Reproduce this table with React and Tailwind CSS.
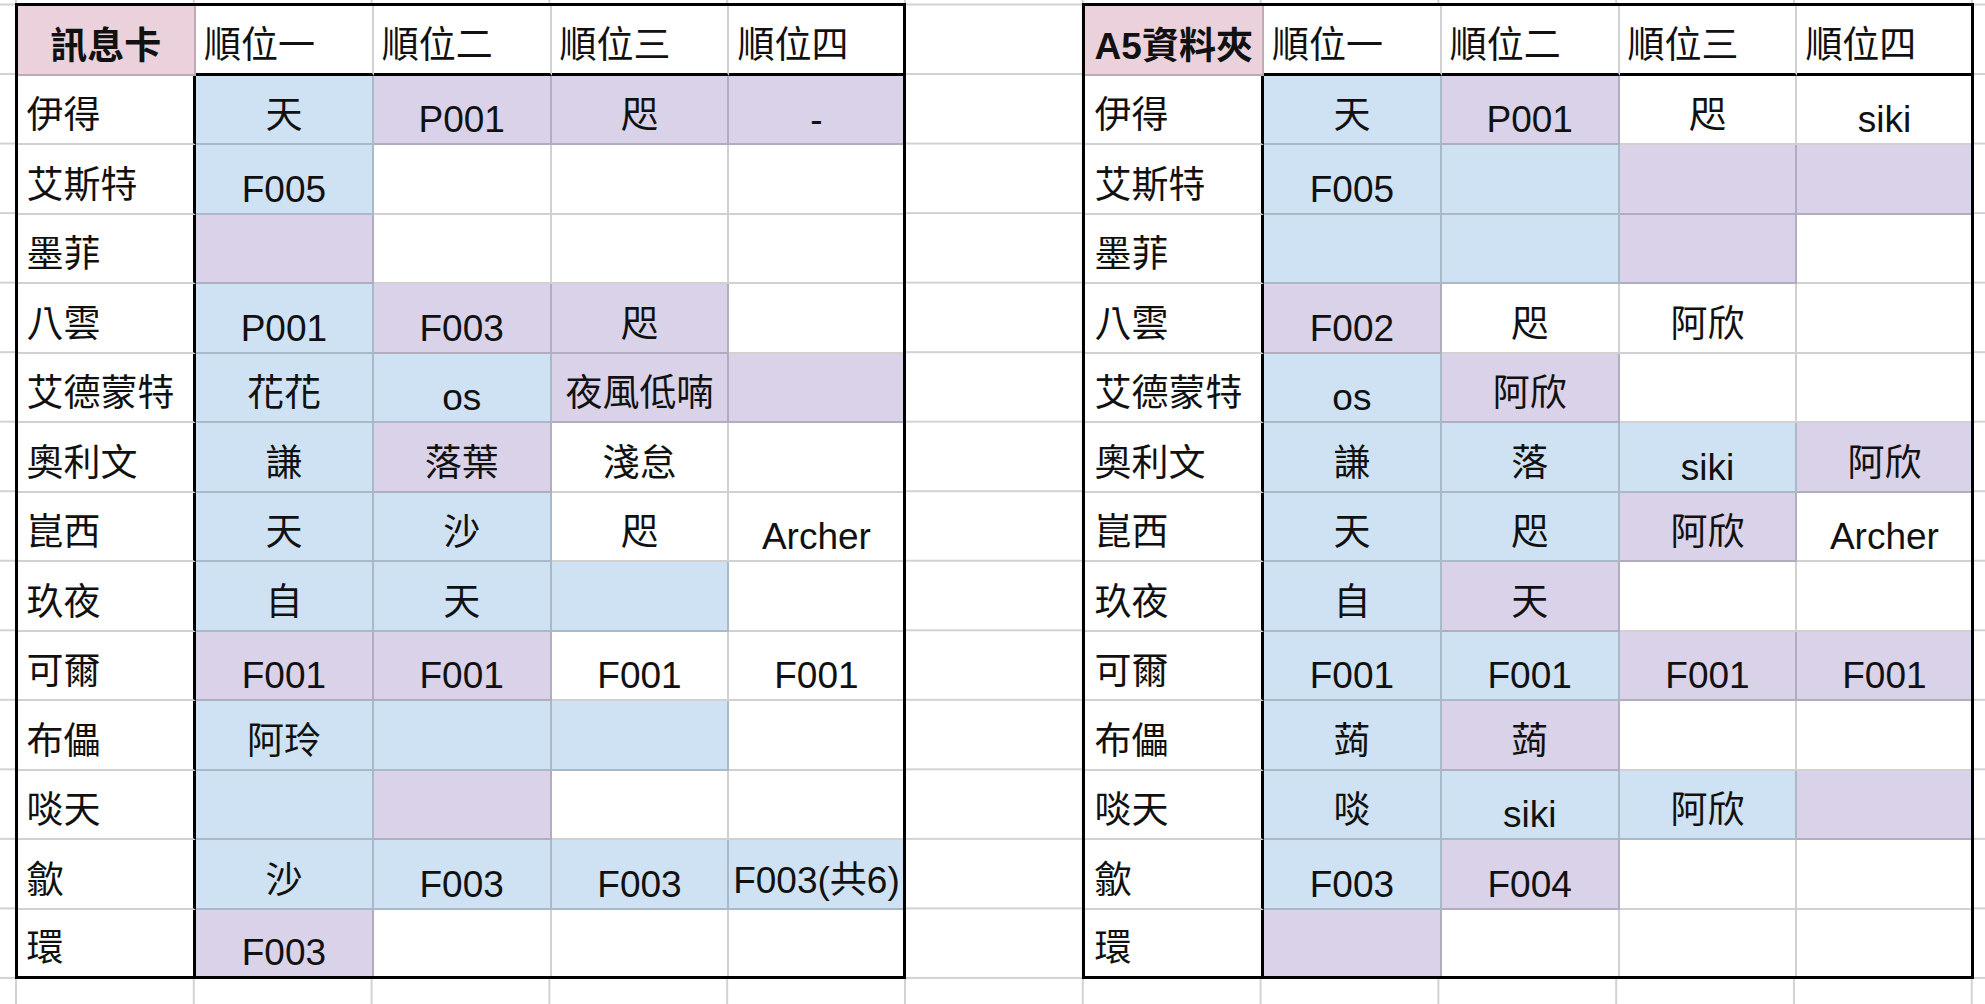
import React from 'react';

// cell fills, as in the sheet
const FILL = {
  b: 'bg-[#cfe2f3]',
  p: 'bg-[#d9d2e9]',
  '': 'bg-white',
};

const HEADS = ['順位一', '順位二', '順位三', '順位四'];

const CARD_ROWS = [
  ['伊得', ['天', 'b'], ['P001', 'p'], ['咫', 'p'], ['-', 'p']],
  ['艾斯特', ['F005', 'b'], ['', ''], ['', ''], ['', '']],
  ['墨菲', ['', 'p'], ['', ''], ['', ''], ['', '']],
  ['八雲', ['P001', 'b'], ['F003', 'p'], ['咫', 'p'], ['', '']],
  ['艾德蒙特', ['花花', 'b'], ['os', 'b'], ['夜風低喃', 'p'], ['', 'p']],
  ['奧利文', ['謙', 'b'], ['落葉', 'p'], ['淺怠', ''], ['', '']],
  ['崑西', ['天', 'b'], ['沙', 'b'], ['咫', ''], ['Archer', '']],
  ['玖夜', ['自', 'b'], ['天', 'b'], ['', 'b'], ['', '']],
  ['可爾', ['F001', 'p'], ['F001', 'p'], ['F001', ''], ['F001', '']],
  ['布儡', ['阿玲', 'b'], ['', 'b'], ['', 'b'], ['', '']],
  ['啖天', ['', 'b'], ['', 'p'], ['', ''], ['', '']],
  ['歙', ['沙', 'b'], ['F003', 'b'], ['F003', 'b'], ['F003(共6)', 'b']],
  ['環', ['F003', 'p'], ['', ''], ['', ''], ['', '']],
];

const FOLDER_ROWS = [
  ['伊得', ['天', 'b'], ['P001', 'p'], ['咫', ''], ['siki', '']],
  ['艾斯特', ['F005', 'b'], ['', 'b'], ['', 'p'], ['', 'p']],
  ['墨菲', ['', 'b'], ['', 'b'], ['', 'p'], ['', '']],
  ['八雲', ['F002', 'p'], ['咫', ''], ['阿欣', ''], ['', '']],
  ['艾德蒙特', ['os', 'b'], ['阿欣', 'p'], ['', ''], ['', '']],
  ['奧利文', ['謙', 'b'], ['落', 'b'], ['siki', 'b'], ['阿欣', 'p']],
  ['崑西', ['天', 'b'], ['咫', 'b'], ['阿欣', 'p'], ['Archer', '']],
  ['玖夜', ['自', 'b'], ['天', 'p'], ['', ''], ['', '']],
  ['可爾', ['F001', 'b'], ['F001', 'b'], ['F001', 'p'], ['F001', 'p']],
  ['布儡', ['蒟', 'b'], ['蒟', 'p'], ['', ''], ['', '']],
  ['啖天', ['啖', 'b'], ['siki', 'b'], ['阿欣', 'b'], ['', 'p']],
  ['歙', ['F003', 'b'], ['F004', 'p'], ['', ''], ['', '']],
  ['環', ['', 'p'], ['', ''], ['', ''], ['', '']],
];

const isLatin = (s) => /^[\x20-\x7e]*$/.test(s);

function Cell({ text, fill, r, c, bold }) {
  const right =
    c === 4
      ? ''
      : c === 0 && r >= 1
        ? 'border-r-[3px] border-r-black'
        : 'border-r-2 border-r-[#0000002e]';
  const bottom =
    r === 13
      ? ''
      : r === 0 && c >= 1
        ? 'border-b-[3px] border-b-black'
        : 'border-b-2 border-b-[#0000002e]';
  const align =
    r === 0 && c >= 1
      ? 'justify-start pl-[8px]'
      : c === 0 && r >= 1
        ? 'justify-start pl-[9px]'
        : 'justify-center';
  const pad = isLatin(text) ? 'pb-[5px]' : 'pb-[9px]';

  return (
    <div
      className={`flex items-end whitespace-nowrap leading-none ${FILL[fill]} ${right} ${bottom} ${align} ${pad} ${bold ? 'font-bold' : ''}`}
    >
      {text}
    </div>
  );
}

function Sheet({ title, rows }) {
  const cells = [];
  cells.push(<Cell key="t" text={title} fill="pink" r={0} c={0} bold />);
  HEADS.forEach((h, i) => cells.push(<Cell key={`h${i}`} text={h} fill="" r={0} c={i + 1} />));
  rows.forEach((row, ri) => {
    const [label, ...vals] = row;
    cells.push(<Cell key={`l${ri}`} text={label} fill="" r={ri + 1} c={0} />);
    vals.forEach(([t, f], ci) =>
      cells.push(<Cell key={`${ri}-${ci}`} text={t} fill={f} r={ri + 1} c={ci + 1} />)
    );
  });

  return (
    <div className="border-[3px] border-black bg-white">
      <div className="grid grid-cols-[178.5px_177.8px_177.8px_177.8px_174.1px] grid-rows-[69.5px_repeat(12,69.54px)_66.5px]">
        {cells}
      </div>
    </div>
  );
}

FILL.pink = 'bg-[#ead1dc]';

export default function App() {
  return (
    <div className="w-[1985px] h-[1004px] overflow-hidden bg-white bg-[linear-gradient(to_right,#d2d2d2_2px,transparent_2px),linear-gradient(to_bottom,#d2d2d2_2px,transparent_2px)] bg-[length:177.8px_69.54px] bg-[position:15px_3.5px] font-['Liberation_Sans','Noto_Sans_CJK_TC',sans-serif] text-[37px] text-[#111]">
      <div className="flex items-start gap-[176px] pt-[3px] pl-[14.5px]">
        <Sheet title="訊息卡" rows={CARD_ROWS} />
        <Sheet title="A5資料夾" rows={FOLDER_ROWS} />
      </div>
    </div>
  );
}
